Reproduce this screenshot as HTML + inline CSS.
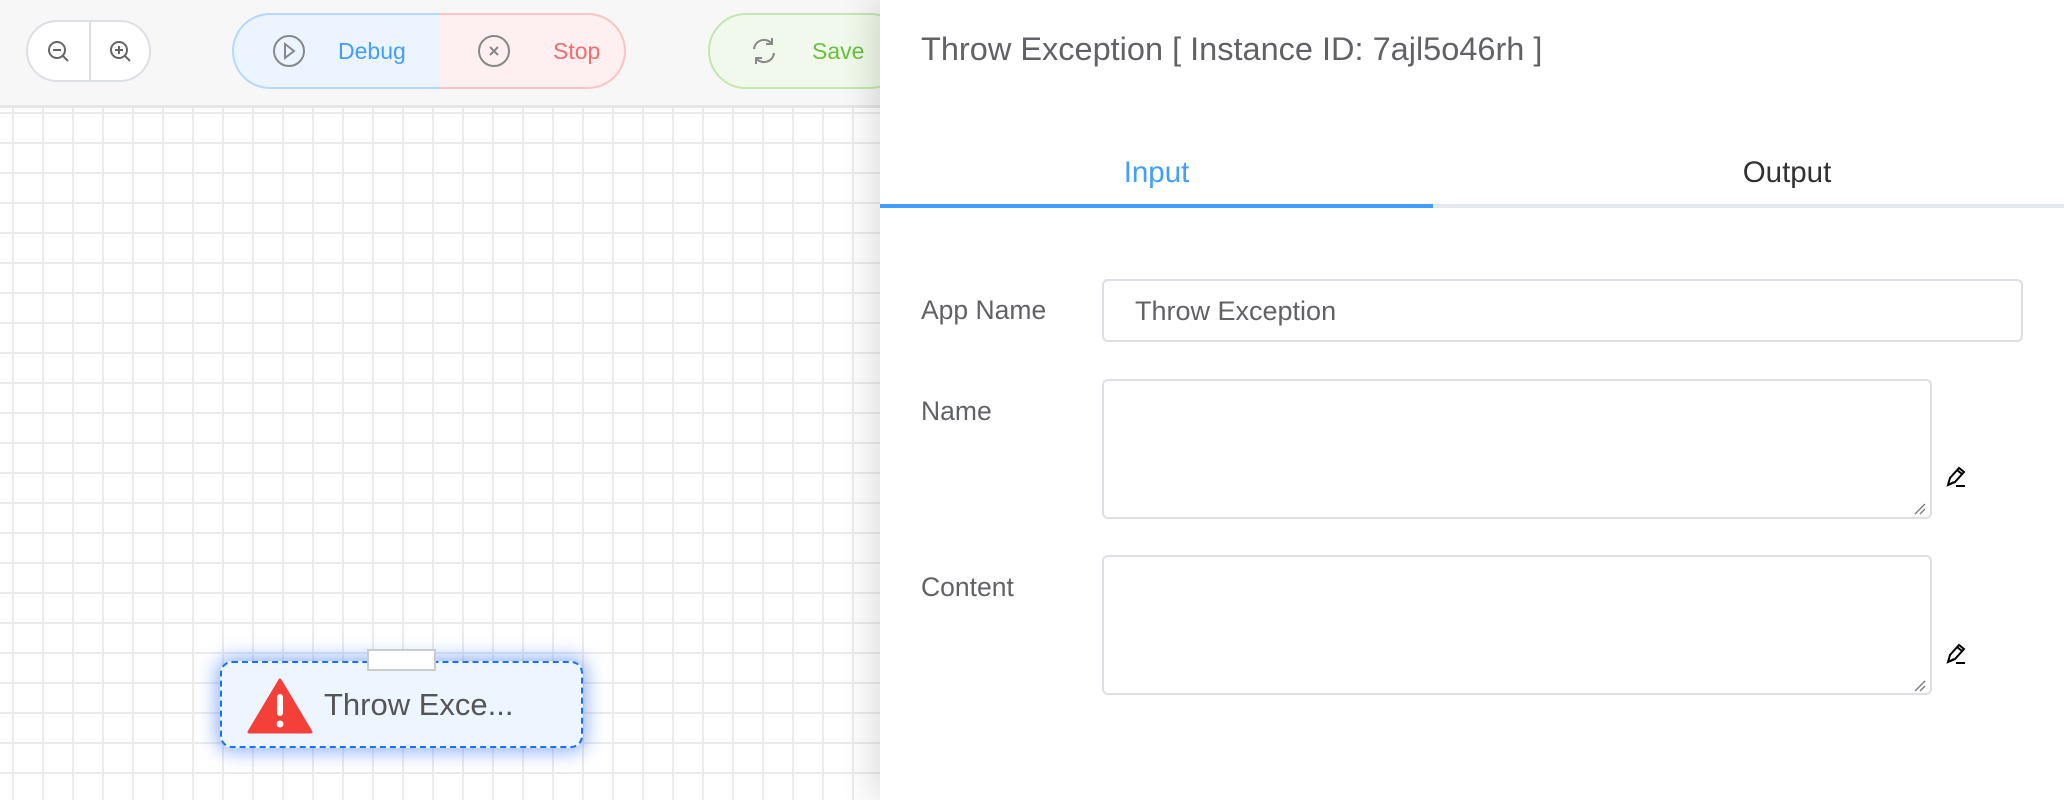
<!DOCTYPE html>
<html><head><meta charset="utf-8"><style>
*{box-sizing:border-box;margin:0;padding:0}
body{width:2064px;height:800px;overflow:hidden;position:relative;font-family:"Liberation Sans",sans-serif;background:#fff}
.grid{position:absolute;left:0;top:108px;width:900px;height:692px;background-color:#fff;
background-image:linear-gradient(to right,#ebebeb 2px,transparent 2px),linear-gradient(to bottom,#ebebeb 2px,transparent 2px);
background-size:30px 30px;background-position:12px 4px}
.bar{position:absolute;left:0;top:0;width:900px;height:108px;background:#f7f7f7;border-bottom:3px solid #e6e6e6}
.zg{position:absolute;left:26px;top:20px;width:125px;height:62px;border:2px solid #dcdfe6;border-radius:31px;background:#fff}
.zg .sep{position:absolute;left:61px;top:0;bottom:0;width:2px;background:#dcdfe6}
.pill{position:absolute;top:13px;height:76px;display:flex;align-items:center;font-size:23px}
.dbg{left:232px;width:207px;background:#ecf5ff;border:2px solid #b3d8ff;border-right:none;border-radius:38px 0 0 38px;color:#409eff}
.stp{left:439px;width:187px;background:#fef0f0;border:2px solid #fbc4c4;border-left:none;border-radius:0 38px 38px 0;color:#f56c6c}
.sav{left:708px;width:200px;background:#f0f9eb;border:2px solid #c2e7b0;border-radius:38px;color:#67c23a}
.panel{position:absolute;left:880px;top:0;width:1184px;height:800px;background:#fff;box-shadow:-10px 0 30px rgba(0,0,0,0.12)}
.title{position:absolute;left:41px;top:31px;font-size:32.5px;color:#606266}
.tab{position:absolute;top:156px;font-size:29.5px;text-align:center}
.lbl{position:absolute;left:41px;font-size:26.5px;color:#606266}
.box{position:absolute;left:222px;border:2px solid #dcdfe6;border-radius:6px;background:#fff}
.node{position:absolute;left:220px;top:661px;width:363px;height:87px;border:2px dashed #1a73e8;border-radius:12px;background:#edf5ff;box-shadow:0 0 18px 4px rgba(64,120,255,0.55)}
</style></head><body>
<div class="grid"></div>
<div class="bar">
 <div class="zg"><div class="sep"></div>
  <svg style="position:absolute;left:18px;top:17px" width="26" height="26" viewBox="0 0 26 26" fill="none" stroke="#666" stroke-width="2"><circle cx="11" cy="11" r="8"/><path d="M7 11h8M17 17l5 5"/></svg>
  <svg style="position:absolute;left:80px;top:17px" width="26" height="26" viewBox="0 0 26 26" fill="none" stroke="#666" stroke-width="2"><circle cx="11" cy="11" r="8"/><path d="M7 11h8M11 7v8M17 17l5 5"/></svg>
 </div>
</div>
<div class="pill dbg"><svg style="margin-left:38px" width="34" height="34" viewBox="0 0 34 34" fill="none" stroke="#888" stroke-width="2"><circle cx="17" cy="17" r="15"/><path d="M13 10l9 7-9 7z"/></svg><span style="margin-left:32px">Debug</span></div>
<div class="pill stp"><svg style="margin-left:38px" width="34" height="34" viewBox="0 0 34 34" fill="none" stroke="#888" stroke-width="2"><circle cx="17" cy="17" r="15"/><path d="M13 13l8 8M21 13l-8 8"/></svg><span style="margin-left:42px">Stop</span></div>
<div class="pill sav"><svg style="margin-left:38px" width="32" height="32" viewBox="0 0 32 32" fill="none" stroke="#888" stroke-width="2"><path d="M6 14a10 10 0 0 1 18-5M26 18a10 10 0 0 1-18 5M24 3v6h-6M8 29v-6h6"/></svg><span style="margin-left:32px">Save</span></div>
<div class="node">
 <div style="position:absolute;left:145px;top:-14px;width:69px;height:22px;background:#fff;border:2px solid #ccc"></div>
 <svg style="position:absolute;left:25px;top:15px" width="66" height="56" viewBox="0 0 66 56"><path d="M33 2 L64 54 L2 54 Z" fill="#f5403a" stroke="#f5403a" stroke-width="3" stroke-linejoin="round"/><rect x="30" y="16" width="6" height="22" rx="3" fill="#fff"/><circle cx="33" cy="46" r="3.5" fill="#fff"/></svg>
 <div style="position:absolute;left:102px;top:24px;font-size:31px;color:#555">Throw Exce...</div>
</div>
<div class="panel">
 <div class="title">Throw Exception [ Instance ID: 7ajl5o46rh ]</div>
 <div class="tab" style="left:0;width:553px;color:#409eff">Input</div>
 <div class="tab" style="left:553px;width:708px;color:#303133">Output</div>
 <div style="position:absolute;left:0;top:204px;width:1184px;height:4px;background:#e4e7ed"></div>
 <div style="position:absolute;left:0;top:204px;width:553px;height:4px;background:#409eff"></div>
 <div class="lbl" style="top:295px">App Name</div>
 <div class="box" style="top:279px;width:921px;height:63px;font-size:27px;color:#606266;padding:15px 0 0 31px">Throw Exception</div>
 <div class="lbl" style="top:396px">Name</div>
 <div class="box" style="top:379px;width:830px;height:140px"></div>
 <div class="lbl" style="top:572px">Content</div>
 <div class="box" style="top:555px;width:830px;height:140px"></div>
 <svg style="position:absolute;left:1034px;top:503px" width="12" height="12" viewBox="0 0 12 12" stroke="#777" stroke-width="1.3"><path d="M1 11L11 1M6 11l5-5"/></svg>
 <svg style="position:absolute;left:1034px;top:680px" width="12" height="12" viewBox="0 0 12 12" stroke="#777" stroke-width="1.3"><path d="M1 11L11 1M6 11l5-5"/></svg>
 <svg style="position:absolute;left:1065px;top:464px" width="26" height="26" viewBox="0 0 26 26" fill="none" stroke="#000" stroke-width="2"><path d="M3 21l2-7 9-10 5 4-9 10z M12 6l5 4 M3 21l6-3 M11 22h9"/></svg>
 <svg style="position:absolute;left:1065px;top:641px" width="26" height="26" viewBox="0 0 26 26" fill="none" stroke="#000" stroke-width="2"><path d="M3 21l2-7 9-10 5 4-9 10z M12 6l5 4 M3 21l6-3 M11 22h9"/></svg>
</div>
</body></html>
